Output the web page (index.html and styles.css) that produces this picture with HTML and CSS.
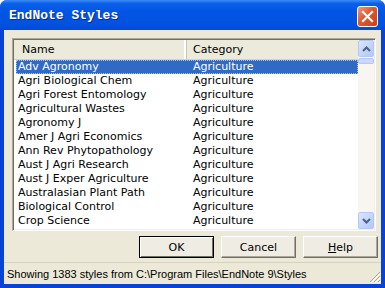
FILE: index.html
```html
<!DOCTYPE html>
<html lang="en">
<head>
    <meta charset="UTF-8">
    <title>EndNote Styles</title>
    <link rel="stylesheet" href="styles.css">
</head>
<body>
    <div class="window">
        <div class="titlebar">
            <span class="title">EndNote Styles</span>
            <div class="close">
                <svg width="13" height="13" viewBox="0 0 13 13">
                    <path d="M2 2 L11 11 M11 2 L2 11" stroke="#fff" stroke-width="2.2" stroke-linecap="square"/>
                </svg>
            </div>
        </div>
        <div class="client">
            <div class="listbox">
                <div class="list">
                    <div class="header">
                        <div class="hcell name">Name</div>
                        <div class="hcell cat">Category</div>
                    </div>
                    <div class="row selected"><span class="name">Adv Agronomy</span><span class="cat">Agriculture</span></div>
                    <div class="row"><span class="name">Agri Biological Chem</span><span class="cat">Agriculture</span></div>
                    <div class="row"><span class="name">Agri Forest Entomology</span><span class="cat">Agriculture</span></div>
                    <div class="row"><span class="name">Agricultural Wastes</span><span class="cat">Agriculture</span></div>
                    <div class="row"><span class="name">Agronomy J</span><span class="cat">Agriculture</span></div>
                    <div class="row"><span class="name">Amer J Agri Economics</span><span class="cat">Agriculture</span></div>
                    <div class="row"><span class="name">Ann Rev Phytopathology</span><span class="cat">Agriculture</span></div>
                    <div class="row"><span class="name">Aust J Agri Research</span><span class="cat">Agriculture</span></div>
                    <div class="row"><span class="name">Aust J Exper Agriculture</span><span class="cat">Agriculture</span></div>
                    <div class="row"><span class="name">Australasian Plant Path</span><span class="cat">Agriculture</span></div>
                    <div class="row"><span class="name">Biological Control</span><span class="cat">Agriculture</span></div>
                    <div class="row"><span class="name">Crop Science</span><span class="cat">Agriculture</span></div>
                </div>
                <div class="scrollbar">
                    <div class="sb-btn">
                        <svg width="9" height="6" viewBox="0 0 9 6"><path d="M1 5 L4.5 1.5 L8 5" fill="none" stroke="#4d6185" stroke-width="2"/></svg>
                    </div>
                    <div class="sb-thumb"></div>
                    <div class="sb-track"></div>
                    <div class="sb-btn">
                        <svg width="9" height="6" viewBox="0 0 9 6"><path d="M1 1 L4.5 4.5 L8 1" fill="none" stroke="#4d6185" stroke-width="2"/></svg>
                    </div>
                </div>
            </div>
            <div class="buttons">
                <button class="btn default">OK</button>
                <button class="btn">Cancel</button>
                <button class="btn"><u>H</u>elp</button>
            </div>
            <div class="statusbar">
                <span>Showing 1383 styles from C:\Program Files\EndNote 9\Styles</span>
                <svg class="grip" width="12" height="12" viewBox="0 0 12 12">
                    <path d="M11 1 L1 11 M11 5 L5 11 M11 9 L9 11" stroke="#aca899" stroke-width="1"/>
                    <path d="M12 2 L2 12 M12 6 L6 12 M12 10 L10 12" stroke="#fff" stroke-width="1"/>
                </svg>
            </div>
        </div>
    </div>
</body>
</html>
```

FILE: styles.css
```css
/* Global reset */
* {
    margin: 0;
    padding: 0;
    box-sizing: border-box;
}

body {
    width: 385px;
    height: 288px;
    overflow: hidden;
    background: #fff;
    font-family: 'DejaVu Sans', sans-serif;
    font-size: 11px;
    color: #000;
}

/* Window frame */
.window {
    width: 385px;
    height: 288px;
    display: flex;
    flex-direction: column;
    background: #0842d6;
    border-radius: 7px 7px 0 0;
    padding: 0 4px 4px 4px;
}

.titlebar {
    height: 30px;
    margin: 0 -4px;
    padding: 0 7px 0 9px;
    display: flex;
    align-items: center;
    justify-content: space-between;
    border-radius: 7px 7px 0 0;
    background: linear-gradient(180deg, #3d8cf6 0%, #0a5fe9 12%, #0255e4 40%, #0052e0 80%, #0349d8 100%);
}

.title {
    font-family: 'Liberation Mono', monospace;
    font-weight: bold;
    font-size: 13px;
    color: #fff;
    text-shadow: 1px 1px 0 #0a2a84;
}

.close {
    width: 21px;
    height: 21px;
    margin-top: 3px;
    border: 1px solid #fff;
    border-radius: 3px;
    background: linear-gradient(135deg, #f09a7c 0%, #e2562c 45%, #c8401a 100%);
    display: flex;
    align-items: center;
    justify-content: center;
}

/* Client area */
.client {
    flex: 1;
    background: #ece9d8;
    display: flex;
    flex-direction: column;
    padding: 8px 0 0 8px;
}

.listbox {
    width: 364px;
    height: 193px;
    display: flex;
    border-top: 1px solid #aca899;
    border-left: 1px solid #aca899;
    border-right: 1px solid #fff;
    border-bottom: 1px solid #fff;
    box-shadow: inset 1px 1px 0 #716f64, inset -1px -1px 0 #f1efe2;
    padding: 1px;
    background: #fff;
}

.list {
    flex: 1;
    overflow: hidden;
}

.header {
    display: flex;
    height: 20px;
    background: #ebeadb;
    border-bottom: 1px solid #d6d2c2;
}

.hcell {
    display: flex;
    align-items: center;
    border-right: 1px solid #c7c5b2;
    box-shadow: inset -2px 0 0 #fff;
}

.hcell.name {
    width: 173px;
    padding-left: 8px;
}

.hcell.cat {
    flex: 1;
    padding-left: 6px;
    border-right: none;
    box-shadow: none;
}

.row {
    display: flex;
    height: 14px;
    line-height: 14px;
    margin-left: 2px;
    white-space: nowrap;
}

.row .name {
    width: 171px;
    padding-left: 2px;
}

.row .cat {
    flex: 1;
    padding-left: 6px;
}

.row.selected {
    background: #316ac5;
    color: #fff;
    outline: 1px dotted #a9c3ee;
    outline-offset: -1px;
}

/* Scrollbar */
.scrollbar {
    width: 16px;
    display: flex;
    flex-direction: column;
    background: #f7f6f1;
}

.sb-btn {
    height: 17px;
    border: 1px solid #b4c8f6;
    border-radius: 2px;
    background: linear-gradient(135deg, #dbe6fd 0%, #c1d3fb 60%, #b2c7f6 100%);
    display: flex;
    align-items: center;
    justify-content: center;
}

.sb-thumb {
    height: 6px;
    margin-top: 1px;
    border: 1px solid #b4c8f6;
    border-radius: 2px;
    background: #c9d8fc;
}

.sb-track {
    flex: 1;
}

/* Buttons */
.buttons {
    display: flex;
    justify-content: flex-end;
    gap: 7px;
    padding: 5px 3px 0 0;
    height: 29px;
}

.btn {
    width: 75px;
    height: 22px;
    font-family: 'DejaVu Sans', sans-serif;
    font-size: 11px;
    color: #000;
    background: #efede3;
    border-top: 1px solid #fff;
    border-left: 1px solid #fff;
    border-right: 1px solid #716f64;
    border-bottom: 1px solid #716f64;
    box-shadow: inset -1px -1px 0 #aca899;
}

.btn.default {
    border: 1px solid #000;
    box-shadow: inset 1px 1px 0 #fff, inset -1px -1px 0 #716f64;
}

/* Status bar */
.statusbar {
    margin: 2px 0 0 -8px;
    flex: 1;
    border-top: 1px solid #d6d2c2;
    display: flex;
    align-items: center;
    justify-content: space-between;
    padding-left: 3px;
    font-family: 'Liberation Sans', sans-serif;
    font-size: 11px;
}

.grip {
    align-self: flex-end;
    margin-bottom: 1px;
}
```
